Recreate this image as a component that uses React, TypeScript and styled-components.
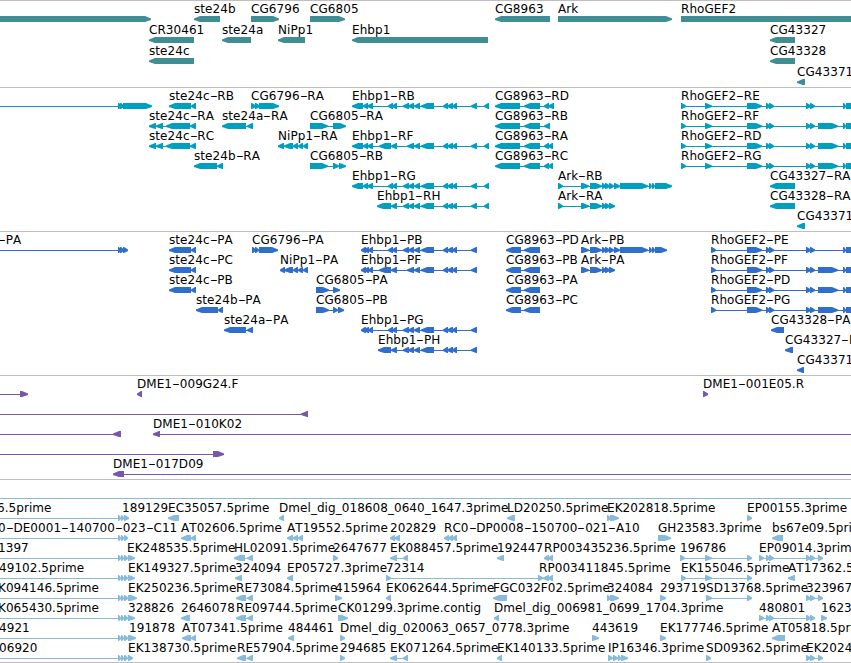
import { Fragment } from 'react'
import styled, { createGlobalStyle } from 'styled-components'

type Feature = {
    name?: string
    labelAt?: number
    dir: 'L' | 'R'
    exons: number[][]
    from?: number
    to?: number
}

type TrackData = {
    id: string
    color: string
    rowHeight: number
    rows: Feature[][]
}

const WIDTH = 851

// exons are written as "start-end start-end"
const feature = (dir: 'L' | 'R', name: string, exons: string, extra: Partial<Feature> = {}): Feature => ({
    dir,
    name,
    exons: exons ? exons.split(' ').map(part => part.split('-').map(Number)) : [],
    ...extra,
})

const left = (name: string, exons: string, extra?: Partial<Feature>) => feature('L', name, exons, extra)
const right = (name: string, exons: string, extra?: Partial<Feature>) => feature('R', name, exons, extra)

const ehbpTail = '414-420 421-434 443-448 447-453 452-457 471-477'
const ehbpB = `388-393 392-397 403-409 408-414 ${ehbpTail}`
const ehbpF = `379-391 391-397 407-414 ${ehbpTail}`
const ehbpH = `391-397 403-409 408-414 ${ehbpTail}`
const rhoE = '747-762 766-770 769-774 806-811 810-815 843-846 846-870'
const rhoF = '747-762 766-770 769-774 806-811 810-815 818-838 843-846 846-870'
const arkA = '581-589 590-602 602-606 605-610 609-615'
const arkB = '581-589 590-602 602-606 605-610 609-614 614-620 620-648 649-652 652-655'

const tracks: TrackData[] = [
    {
        id: 'gene',
        color: '#408e93',
        rowHeight: 21,
        rows: [
            [
                right('', '0-151'),
                left('ste24b', '194-220'),
                right('CG6796', '251-279'),
                right('CG6805', '310-345'),
                left('CG8963', '495-550'),
                right('Ark', '558-672'),
                right('RhoGEF2', '681-870'),
            ],
            [
                left('CR30461', '149-194'),
                left('ste24a', '222-251'),
                left('NiPp1', '278-305'),
                left('Ehbp1', '352-488'),
                left('CG43327', '770-795'),
            ],
            [left('ste24c', '149-194'), left('CG43328', '770-795')],
            [left('CG43371', '797-805')],
        ],
    },
    {
        id: 'transcript',
        color: '#009fc0',
        rowHeight: 20,
        rows: [
            [
                right('', '118-122 120-124 123-152', { from: 0 }),
                left('ste24c-RB', '169-191 191-196'),
                right('CG6796-RA', '251-256 255-260 259-279'),
                left('Ehbp1-RB', `352-363 363-368 367-373 ${ehbpB} 484-489`),
                left('CG8963-RD', '495-520 524-540 544-549 548-554'),
                right('RhoGEF2-RE', `681-686 705-712 ${rhoE}`),
            ],
            [
                left('ste24c-RA', '149-156 156-163 166-190 190-196'),
                left('ste24a-RA', '222-246 247-253'),
                right('CG6805-RA', '310-328 333-346'),
                left('CG8963-RB', '495-520 524-540 544-550'),
                right('RhoGEF2-RF', `681-686 705-712 ${rhoF}`),
            ],
            [
                left('ste24c-RC', '149-156 156-163 166-190 190-196'),
                left('NiPp1-RA', '278-284 284-293 293-298 298-303 303-308'),
                left('Ehbp1-RF', `352-363 363-368 367-373 ${ehbpF} 484-489`),
                left('CG8963-RA', '495-520 524-540 544-549 548-553'),
                right('RhoGEF2-RD', `681-686 705-712 ${rhoF}`),
            ],
            [
                left('ste24b-RA', '194-217 217-223'),
                right('CG6805-RB', '310-328 333-339 339-346'),
                left('CG8963-RC', '495-520 524-540 544-549 548-553'),
                right('RhoGEF2-RG', `681-686 705-712 ${rhoF}`),
            ],
            [
                left('Ehbp1-RG', `352-363 363-368 367-373 ${ehbpB} 484-489`),
                right('Ark-RB', `558-563 ${arkB} 655-672`),
                left('CG43327-RA', '770-795'),
            ],
            [
                left('Ehbp1-RH', `377-391 ${ehbpH} 484-489`),
                right('Ark-RA', `558-563 ${arkA}`),
                left('CG43328-RA', '770-795'),
            ],
            [left('CG43371-RA', '797-805')],
        ],
    },
    {
        id: 'cds',
        color: '#306ecc',
        rowHeight: 20,
        rows: [
            [
                right('-PA', '118-121 120-124 123-128', { from: 0, labelAt: -2 }),
                left('ste24c-PA', '169-191 191-196'),
                right('CG6796-PA', '252-256 255-259 259-278'),
                left('Ehbp1-PB', `361-366 364-369 368-373 ${ehbpB}`),
                left('CG8963-PD', '506-521 524-540'),
                right('Ark-PB', `${arkB} 655-667`),
                right('RhoGEF2-PE', `711-716 ${rhoE}`),
            ],
            [
                left('ste24c-PC', '169-191 191-196'),
                left('NiPp1-PA', '280-285 284-293 293-298 298-303 303-308'),
                left('Ehbp1-PF', `361-366 364-369 368-373 ${ehbpF}`),
                left('CG8963-PB', '506-521 524-540'),
                right('Ark-PA', arkA),
                right('RhoGEF2-PF', `711-716 ${rhoF}`),
            ],
            [
                left('ste24c-PB', '169-191 191-196'),
                right('CG6805-PA', '316-329 333-340'),
                left('CG8963-PA', '506-521 524-540'),
                right('RhoGEF2-PD', `711-716 ${rhoF}`),
            ],
            [
                left('ste24b-PA', '196-218 218-223'),
                right('CG6805-PB', '316-329 333-338 338-344'),
                left('CG8963-PC', '506-521 524-540'),
                right('RhoGEF2-PG', `711-716 ${rhoF}`),
            ],
            [
                left('ste24a-PA', '224-246 247-253'),
                left('Ehbp1-PG', `361-366 364-369 368-373 ${ehbpB}`),
                left('CG43328-PA', '771-784'),
            ],
            [left('Ehbp1-PH', `378-391 ${ehbpH}`), left('CG43327-PA', '785-793')],
            [left('CG43371-PA', '797-804')],
        ],
    },
    {
        id: 'bac',
        color: '#7758a6',
        rowHeight: 20,
        rows: [
            [
                right('', '20-28', { from: 0 }),
                left('DME1-009G24.F', '137-142'),
                right('DME1-001E05.R', '703-708'),
            ],
            [left('', '301-308', { from: 0 })],
            [left('', '113-121', { from: 0 }), left('DME1-010K02', '153-160', { to: WIDTH })],
            [right('', '213-224', { from: 0 })],
            [left('DME1-017D09', '113-124', { to: WIDTH })],
        ],
    },
    {
        id: 'est',
        color: '#87bbdb',
        rowHeight: 20,
        rows: [
            [right('', '', { from: 0, to: WIDTH })],
            [
                right('6.5prime', '118-121 121-124 124-129', { from: 0, labelAt: -3 }),
                right('189129', '', { labelAt: 122 }),
                left('EC35057.5prime', '168-179'),
                left('Dmel_dig_018608_0640_1647.3prime', '279-284'),
                left('LD20250.5prime', '507-515'),
                right('EK202818.5prime', '607-611 610-619'),
                right('EP00155.3prime', '747-752'),
            ],
            [
                right('0-DE0001-140700-023-C11', '118-121 121-124 124-128', { from: 0, labelAt: -2 }),
                left('AT02606.5prime', '181-191 191-196'),
                left('AT19552.5prime', '287-293 293-298 298-303'),
                left('202829', '390-395 394-400'),
                left('RC0-DP0008-150700-021-A10', '444-449 448-453 452-457'),
                right('GH23583.3prime', '658-671'),
                left('bs67e09.5prime', '772-783'),
            ],
            [
                right('1397', '118-121 121-124 124-128 128-135', { from: 0, labelAt: -2 }),
                right('EK248535.5prime', '', { labelAt: 127 }),
                left('HL02091.5prime', '234-245 247-253'),
                right('2647677', '333-338'),
                left('EK088457.5prime', '390-397 403-408'),
                left('192447', '497-504'),
                left('RP003435236.5prime', '544-549 548-553'),
                right('196786', '680-685 705-712 747-752'),
                right('EP09014.3prime', '759-764 766-770 769-774 806-811 810-815 818-823'),
            ],
            [
                right('49102.5prime', '118-121 121-124 124-128 128-135', { from: 0, labelAt: -1 }),
                right('EK149327.5prime', '', { labelAt: 128 }),
                left('324094', '235-242'),
                left('EP05727.3prime', '287-293'),
                right('72314', '386-391 538-543'),
                left('RP003411845.5prime', '543-549 548-553', { labelAt: 539 }),
                right('EK155046.5prime', '681-686 705-712 747-752'),
                left('AT17362.5prime', '788-795'),
            ],
            [
                right('K094146.5prime', '118-121 121-124 124-128 128-137', { from: 0, labelAt: -2 }),
                right('EK250236.5prime', '', { labelAt: 128 }),
                left('RE73084.5prime', '236-246 247-253'),
                right('415964', '335-342'),
                left('EK062644.5prime', '386-391'),
                left('FGC032F02.5prime', '493-507'),
                right('324084', '607-611 610-619'),
                right('293719', '660-666'),
                right('SD13768.5prime', '706-712 747-752'),
                right('323967', '806-811 810-815 818-823'),
            ],
            [
                right('K065430.5prime', '118-121 121-124 124-128 128-135', { from: 0, labelAt: -2 }),
                right('328826', '', { labelAt: 128 }),
                left('2646078', '181-190'),
                left('RE09744.5prime', '236-246 247-253'),
                right('CK01299.3prime.contig', '338-348'),
                left('Dmel_dig_006981_0699_1704.3prime', '494-499'),
                right('480801', '759-764 766-770 769-774 806-811 810-815'),
                right('1623', '821-827'),
            ],
            [
                right('4921', '118-121 121-124 124-128 128-136', { from: 0, labelAt: -1 }),
                right('191878', '', { labelAt: 129 }),
                left('AT07341.5prime', '182-191 191-196'),
                left('484461', '288-294'),
                right('Dmel_dig_020063_0657_0778.3prime', '340-345'),
                right('443619', '592-599'),
                right('EK177746.5prime', '660-666'),
                left('AT05818.5prime', '772-785'),
            ],
            [
                right('06920', '118-121 121-124 124-128 128-133', { from: 0, labelAt: -1 }),
                right('EK138730.5prime', '', { labelAt: 128 }),
                left('RE57904.5prime', '237-246 247-253'),
                right('294685', '340-345'),
                left('EK071264.5prime', '390-397 403-408'),
                left('EK140133.5prime', '497-502'),
                right('IP16346.3prime', '608-613 613-618 618-621 621-628'),
                right('SD09362.5prime', '706-711'),
                right('EK2024', '806-811 810-815 818-823'),
            ],
        ],
    },
]

// a box with a pointed end, 6px high; short ones keep a sliver of the box
const arrowPoints = (dir: 'L' | 'R', [start, end]: number[]) => {
    const tip = Math.min(6, end - start - 1)
    return dir === 'L'
        ? `${end},0 ${start + tip},0 ${start},2.5 ${start},4 ${start + tip},6 ${end},6`
        : `${start},0 ${end - tip},0 ${end},2.5 ${end},4 ${end - tip},6 ${start},6`
}

const Glyphs = ({ features }: { features: Feature[] }) => (
    <GlyphStrip width={WIDTH} height={6} viewBox={`0 0 ${WIDTH} 6`}>
        {features.map((item, index) => {
            const from = item.from ?? item.exons[0]?.[0]
            const to = item.to ?? item.exons[item.exons.length - 1]?.[1]
            return (
                <g key={index}>
                    {from !== undefined && to !== undefined && (
                        <rect x={from} y={3} width={to - from} height={1} />
                    )}
                    {item.exons.map(exon => (
                        <polygon key={exon.join()} points={arrowPoints(item.dir, exon)} />
                    ))}
                </g>
            )
        })}
    </GlyphStrip>
)

const Name = ({ text }: { text: string }) => (
    <>
        {text.split('-').map((part, index) => (
            <Fragment key={index}>
                {index > 0 && <Dash>-</Dash>}
                {part}
            </Fragment>
        ))}
    </>
)

export default function App() {
    return (
        <>
            <GlobalStyle />
            <Browser>
                {tracks.map(track => (
                    <Track key={track.id} $color={track.color}>
                        {track.rows.map((row, index) => (
                            <Row key={index} $height={track.rowHeight}>
                                <Labels>
                                    {row.map(item => item.name && (
                                        <Label key={item.name} style={{ left: item.labelAt ?? item.exons[0][0] }}>
                                            <Name text={item.name} />
                                        </Label>
                                    ))}
                                </Labels>
                                <Glyphs features={row} />
                            </Row>
                        ))}
                    </Track>
                ))}
            </Browser>
        </>
    )
}

const GlobalStyle = createGlobalStyle`
    body{
        margin: 0;
        background: #fff;
        overflow: hidden;
    }
`

const Browser = styled.main`
    display: flex;
    flex-direction: column;
    width: ${WIDTH}px;
    height: 663px;
    overflow: hidden;
    box-sizing: border-box;
    border-bottom: 1px solid #bebebe;
    font-family: "DejaVu Sans", sans-serif;
    font-size: 12px;
    line-height: 14px;
    letter-spacing: 0.06px;
    font-kerning: none;
    color: #000;
`

const Track = styled.section<{ $color: string }>`
    flex: none;
    padding-bottom: 3px;
    border-top: 1px solid #bebebe;
    fill: ${({ $color }) => $color};

    &:first-child{
        padding-bottom: 2px;
    }
    &:last-child{
        padding-bottom: 2px;
    }
`

const Row = styled.div<{ $height: number }>`
    display: flex;
    flex-direction: column;
    height: ${({ $height }) => $height}px;
`

const Labels = styled.div`
    position: relative;
    flex: none;
    height: 15px;
`

const Label = styled.span`
    position: absolute;
    top: 1px;
    white-space: nowrap;
`

const Dash = styled.span`
    display: inline-block;
    width: 7.7px;
    text-align: center;
    transform: scaleX(1.8);
`

const GlyphStrip = styled.svg`
    display: block;
    flex: none;
`
